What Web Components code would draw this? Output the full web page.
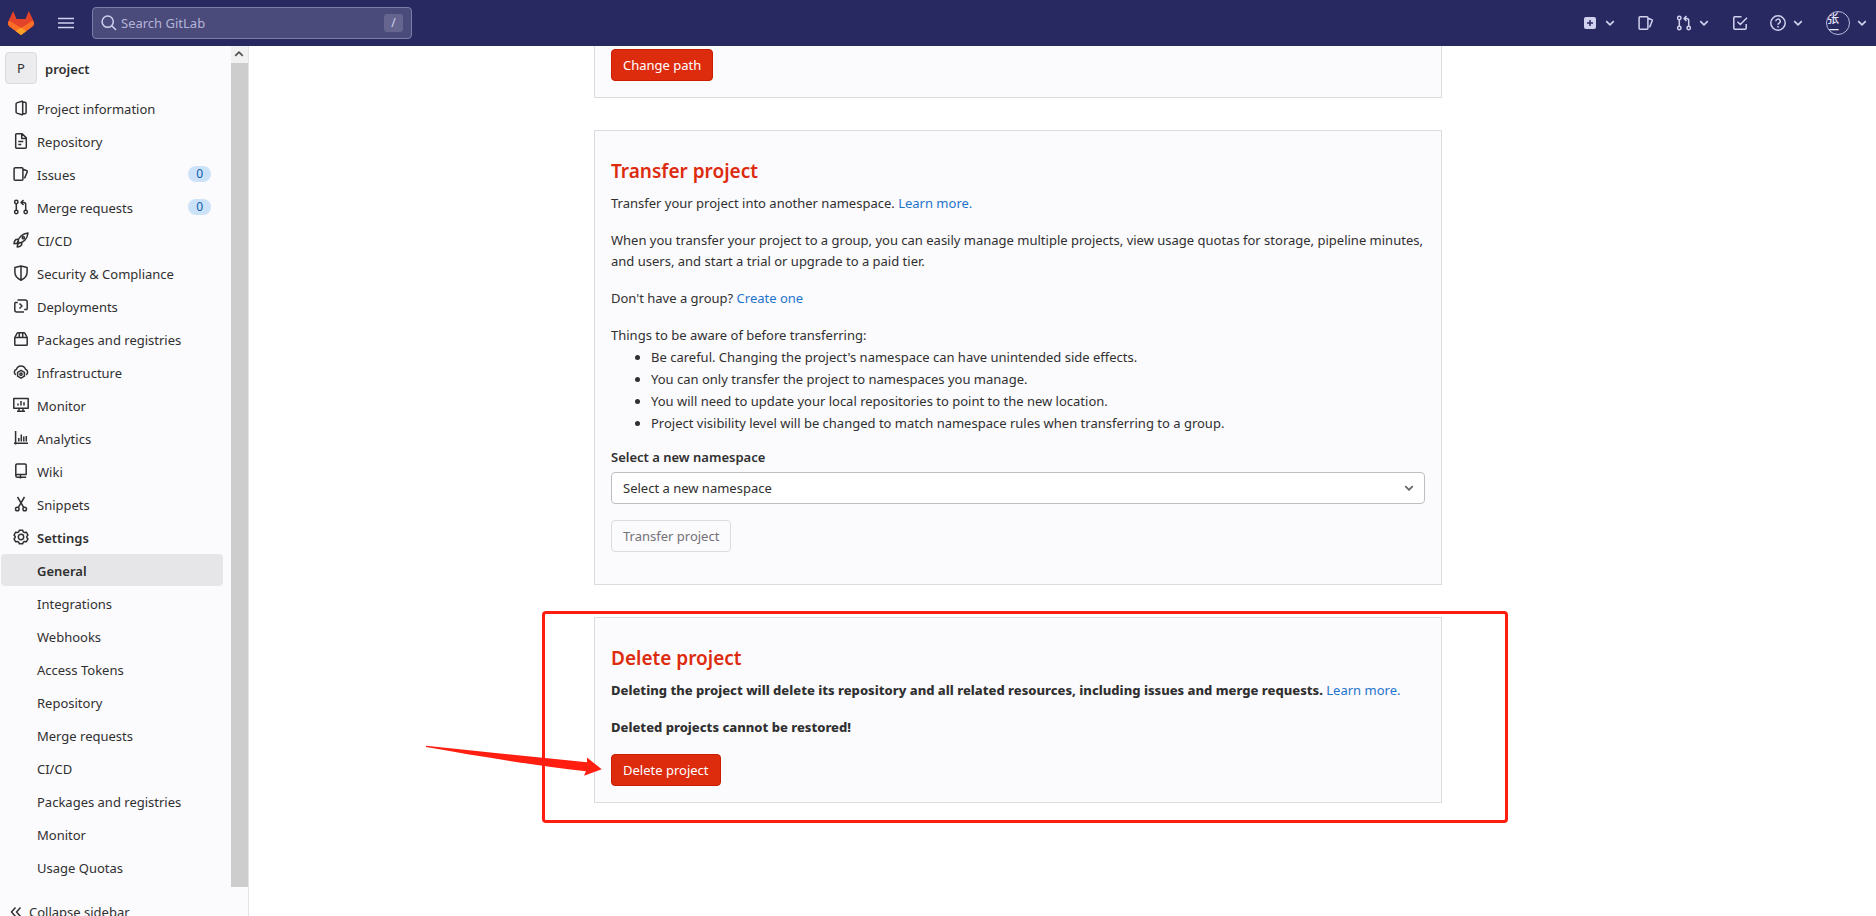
<!DOCTYPE html>
<html lang="en">
<head>
<meta charset="utf-8">
<title>General · Settings · project · GitLab</title>
<style>
  body {
    margin: 0;
    font: 13px/21px "Noto Sans", "Noto Sans CJK SC", sans-serif;
    color: #303030;
    background: #fff;
  }
</style>
</head>
<body>
<gl-page></gl-page>

<script>
const icons = {
  project: `<path d="M9.7 1v14M9.7 1 3.8 2.9a1 1 0 0 0-.7 1v8.2a1 1 0 0 0 .7 1L9.7 15M9.7 2.2h2.2a1.2 1.2 0 0 1 1.2 1.2v9.2a1.2 1.2 0 0 1-1.2 1.2H9.7"/>`,
  doc: `<path d="M3.6.8h5.6l4.1 4.1v9.3a1 1 0 0 1-1 1H3.6a.9.9 0 0 1-.9-.9V1.7a.9.9 0 0 1 .9-.9zM8.7 1v4.4H13M5.3 8.6h5M5.3 11.5h3"/>`,
  issues: `<path d="M2.1 1.8h6.8a1 1 0 0 1 1 1v10.4a1 1 0 0 1-1 1H2.1a1 1 0 0 1-1-1V2.8a1 1 0 0 1 1-1zM10 3.3l3.8 1.4a.8.8 0 0 1 .5 1L11.5 12.4"/>`,
  merge: `<circle cx="3.3" cy="3" r="1.7"/><circle cx="3.3" cy="13" r="1.7"/><circle cx="12.7" cy="13" r="1.7"/><path d="M3.3 4.8v6.4M12.7 11.2V5.5a2 2 0 0 0-2-2H8.5M10.5 1 8 3.5 10.5 6"/>`,
  rocket: `<path d="M5 9.4C5.6 5.6 9 1.6 15 1c-.6 6-4.600 9.400-8.400 10zM5.200 7.200 3 7.400C1.600 8.600 1 10.300 1 11.800l3-.6M8.800 10.800l-.2 2.200c-1.200 1.400-2.900 2-4.400 2l.6-3M5 9.400l-1 2 .8.800 1.800-1.200"/><circle cx="10.3" cy="5.7" r="1.1"/>`,
  shield: `<path d="M8 1 1.9 2.6v4.6c0 4 2.7 6.4 6.1 8 3.4-1.6 6.1-4 6.1-8V2.6zM8 1v14"/>`,
  deployments: `<path d="M1.800 4.500V12a2 2 0 0 0 2 2H11M4.500 2h7.700a2 2 0 0 1 2 2v7.500M1.800 4.500h3M14.200 11.500h-3M6.500 5.500 9 8l-2.500 2.500"/>`,
  package: `<path d="M1.800 6.500h12.400v7a.8.8 0 0 1-.8.8H2.600a.8.8 0 0 1-.8-.8zM1.800 6.500l2.400-4.300a1 1 0 0 1 .9-.5h5.800a1 1 0 0 1 .9.5l2.400 4.300M6.300 1.700v4.800M9.700 1.700v4.800"/>`,
  cloud: `<path d="M2.900 10.800A3 3 0 0 1 3.500 5.300 4.700 4.700 0 0 1 12.500 5.300a3 3 0 0 1 .6 5.500"/><path d="M8 6.300l3.400 2v3.900L8 14.200l-3.400-2V8.300z"/><circle cx="8" cy="10.200" r="1.100"/>`,
  monitor: `<path d="M.8 1.500h14.400v9.800H.8zM6 11v3M10 11v3M4 14.200h8M5 6.500v2M8 4v4.500M11 5.300v3.200"/>`,
  chart: `<path d="M2.600 1v13.500M1 13.200h14M5.800 8v3.500M8.300 4.500v7M10.800 6.500v5M13.300 6v5.500"/>`,
  wiki: `<path d="M2.800 12.800V2.200a1.200 1.200 0 0 1 1.200-1.200h8a1.200 1.200 0 0 1 1.200 1.200v9.300H4.300a1.400 1.400 0 0 0 0 2.800h8.900M7.500 11.500v4"/>`,
  scissors: `<circle cx="4.300" cy="13" r="1.800"/><circle cx="11.700" cy="13" r="1.800"/><path d="M5.300 11.400 11.500 1M10.700 11.400 4.500 1"/>`,
  gear: `<path d="M6.300 1.200h3.400l.6 1.700 1.200.7 1.800-.4 1.700 2.900-1.200 1.400v1l1.200 1.400-1.700 2.900-1.800-.4-1.200.7-.6 1.700H6.300l-.6-1.700-1.200-.7-1.800.4L1 9.900l1.200-1.400v-1L1 6.100l1.700-2.900 1.800.4 1.200-.7z"/><circle cx="8" cy="8" r="2.700"/>`,
  collapse: `<path d="M7.500 3.500 3.500 8l4 4.500M12.500 3.500 8.500 8l4 4.500"/>`,
  menu: `<path d="M0 3.500h16M0 8h16M0 12.500h16"/>`,
  search: `<circle cx="6.700" cy="6.700" r="5.600"/><path d="M10.800 10.800 15 15"/>`,
  todo: `<path d="M9.500 1.800H2.800a1 1 0 0 0-1 1v10.400a1 1 0 0 0 1 1h10.400a1 1 0 0 0 1-1V9M5.500 6.800 8.300 9.500 15 2.800"/>`,
  help: `<circle cx="8" cy="8" r="7.200"/><path d="M5.800 6.300a2.200 2.200 0 1 1 3.300 1.900c-.7.4-1.100.8-1.100 1.500M8 11v1.500"/>`,
  chevron: `<path d="M3 5.500 8 10.500l5-5" stroke-width="2.200"/>`,
  plus: `<rect x="2" y="2" width="12" height="12" rx="2" fill="currentColor" stroke="none"/><path d="M8 5v6M5 8h6" stroke="#292961"/>`,
};

class GlIcon extends HTMLElement {
  connectedCallback() {
    const size = this.getAttribute("size") || 16;
    this.attachShadow({ mode: "open" }).innerHTML = `
      <style>
        :host { display: inline-flex; flex: none; }
        svg { fill: none; stroke: currentColor; stroke-width: 1.5; stroke-linejoin: round; }
      </style>
      <svg width="${size}" height="${size}" viewBox="0 0 16 16" aria-hidden="true">${icons[this.getAttribute("name")]}</svg>`;
  }
}

class GlButton extends HTMLElement {
  connectedCallback() {
    this.attachShadow({ mode: "open" }).innerHTML = `
      <style>
        :host { display: block; }
        button {
          display: block;
          height: 32px;
          padding: 0 11px;
          font: inherit;
          color: #fff;
          background: #dd2b0e;
          border: 1px solid #c91c00;
          border-radius: 4px;
        }
        button:disabled { color: #737278; background: #fbfafd; border-color: #dcdcde; }
      </style>
      <button type="button" ${this.hasAttribute("disabled") ? "disabled" : ""}><slot></slot></button>`;
  }
}

class GlNavbar extends HTMLElement {
  connectedCallback() {
    this.attachShadow({ mode: "open" }).innerHTML = `
      <style>
        :host {
          display: flex;
          align-items: center;
          flex: none;
          height: 46px;
          padding: 0 8px;
          box-sizing: border-box;
          color: #d1d1f0;
          background: #292961;
        }
        button, a { display: flex; align-items: center; gap: 6px; padding: 0; border: 0; background: none; color: inherit; font: inherit; text-decoration: none; }
        .menu { margin: 0 18px 0 24px; }
        .search {
          display: flex;
          align-items: center;
          width: 320px;
          height: 32px;
          padding: 0 8px;
          gap: 4px;
          box-sizing: border-box;
          background: #4a4a7b;
          border: 1px solid #7d7dac;
          border-radius: 4px;
        }
        input { flex: 1; min-width: 0; padding: 0; border: 0; outline: 0; background: none; color: inherit; font: inherit; }
        input::placeholder { color: #b4b4d8; opacity: 1; }
        kbd {
          width: 19px;
          height: 18px;
          font: 12px/18px "Noto Sans", sans-serif;
          text-align: center;
          background: #65658f;
          border-radius: 3px;
        }
        .tools { display: flex; align-items: center; gap: 22px; margin-left: auto; }
        .avatar {
          width: 24px;
          height: 24px;
          padding-top: 1px;
          box-sizing: border-box;
          overflow: hidden;
          border: 1px solid #b9b9e0;
          border-radius: 50%;
          color: #e6e6fa;
          font-size: 12px;
          font-weight: 500;
          line-height: 12px;
          text-align: left;
        }
      </style>
      <a href="#" aria-label="Dashboard">
        <svg width="26" height="26" viewBox="0 0 26 26">
          <path fill="#e24329" d="M13 25 1 16 0 12 5.200 1 8.500 9h9L20.800 1 26 12l-1 4z"/>
          <path fill="#fc6d26" d="M13 25 1.500 16.500A4 4 0 0 1 .3 11.800L2 11l11 7 11-7 1.700.8a4 4 0 0 1-1.200 4.700z"/>
          <path fill="#fca326" d="M13 25 7.800 21.200 13 17.500l5.200 3.700z"/>
        </svg>
      </a>
      <button class="menu" aria-label="Menu"><gl-icon name="menu"></gl-icon></button>
      <label class="search">
        <gl-icon name="search"></gl-icon>
        <input type="text" placeholder="Search GitLab" aria-label="Search GitLab">
        <kbd>/</kbd>
      </label>
      <div class="tools">
        <button aria-label="Create new"><gl-icon name="plus"></gl-icon><gl-icon name="chevron" size="12"></gl-icon></button>
        <a href="#" aria-label="Issues"><gl-icon name="issues"></gl-icon></a>
        <button aria-label="Merge requests"><gl-icon name="merge"></gl-icon><gl-icon name="chevron" size="12"></gl-icon></button>
        <a href="#" aria-label="To-Do List"><gl-icon name="todo"></gl-icon></a>
        <button aria-label="Help"><gl-icon name="help"></gl-icon><gl-icon name="chevron" size="12"></gl-icon></button>
        <button><div class="avatar">张<br>一</div><gl-icon name="chevron" size="12"></gl-icon></button>
      </div>`;
  }
}

class NavItem extends HTMLElement {
  connectedCallback() {
    const icon = this.getAttribute("icon");
    const count = this.getAttribute("count");
    this.attachShadow({ mode: "open" }).innerHTML = `
      <style>
        :host { display: block; margin: 0 8px 1px 1px; }
        a {
          display: flex;
          align-items: center;
          gap: 8px;
          height: 32px;
          padding: 0 12px;
          color: inherit;
          text-decoration: none;
          border-radius: 4px;
        }
        .text { padding-top: 2px; }
        a.sub { padding-left: 36px; }
        :host([active]) a { background: #e6e6e8; }
        :host([bold]) a { font-weight: 600; }
        .badge {
          margin-left: auto;
          padding: 0 8px;
          font-size: 12px;
          line-height: 16px;
          color: #0b5cad;
          background: #cbe2f9;
          border-radius: 8px;
        }
      </style>
      <a href="#" class="${icon ? "" : "sub"}">
        ${icon ? `<gl-icon name="${icon}"></gl-icon>` : ""}
        <span class="text"><slot></slot></span>
        ${count ? `<span class="badge">${count}</span>` : ""}
      </a>`;
  }
}

class GlSidebar extends HTMLElement {
  connectedCallback() {
    this.attachShadow({ mode: "open" }).innerHTML = `
      <style>
        :host {
          display: flex;
          flex-direction: column;
          flex: none;
          width: 248px;
          background: #fbfafd;
          border-right: 1px solid #e3e3e6;
        }
        .scroll { display: flex; flex: none; }
        nav { flex: 1; padding-bottom: 3px; }
        .track { display: flex; flex-direction: column; width: 17px; background: #cdcdcd; }
        .track gl-icon { justify-content: center; padding: 3px 0 2px; color: #505050; background: #f1f1f1; transform: rotate(180deg); }
        .context { display: flex; align-items: center; gap: 8px; padding: 6px 5px 8px; color: inherit; font-weight: 600; text-decoration: none; }
        .name { padding-top: 2px; }
        .avatar {
          width: 30px;
          font-weight: 400;
          line-height: 30px;
          text-align: center;
          background: #ececef;
          border: 1px solid #dcdcde;
          border-radius: 4px;
        }
        .toggle {
          display: flex;
          align-items: center;
          flex: none;
          gap: 5px;
          height: 50px;
          padding: 0 8px;
          border: 0;
          background: none;
          color: inherit;
          font: inherit;
        }
      </style>
      <div class="scroll">
        <nav aria-label="Project navigation">
          <a class="context" href="#"><span class="avatar">P</span><span class="name">project</span></a>
          <nav-item icon="project">Project information</nav-item>
          <nav-item icon="doc">Repository</nav-item>
          <nav-item icon="issues" count="0">Issues</nav-item>
          <nav-item icon="merge" count="0">Merge requests</nav-item>
          <nav-item icon="rocket">CI/CD</nav-item>
          <nav-item icon="shield">Security &amp; Compliance</nav-item>
          <nav-item icon="deployments">Deployments</nav-item>
          <nav-item icon="package">Packages and registries</nav-item>
          <nav-item icon="cloud">Infrastructure</nav-item>
          <nav-item icon="monitor">Monitor</nav-item>
          <nav-item icon="chart">Analytics</nav-item>
          <nav-item icon="wiki">Wiki</nav-item>
          <nav-item icon="scissors">Snippets</nav-item>
          <nav-item icon="gear" bold>Settings</nav-item>
          <nav-item active bold>General</nav-item>
          <nav-item>Integrations</nav-item>
          <nav-item>Webhooks</nav-item>
          <nav-item>Access Tokens</nav-item>
          <nav-item>Repository</nav-item>
          <nav-item>Merge requests</nav-item>
          <nav-item>CI/CD</nav-item>
          <nav-item>Packages and registries</nav-item>
          <nav-item>Monitor</nav-item>
          <nav-item>Usage Quotas</nav-item>
        </nav>
        <div class="track"><gl-icon name="chevron" size="12"></gl-icon></div>
      </div>
      <button class="toggle" type="button"><gl-icon name="collapse"></gl-icon>Collapse sidebar</button>`;
  }
}

class DangerPanel extends HTMLElement {
  connectedCallback() {
    const heading = this.getAttribute("heading");
    this.attachShadow({ mode: "open" }).innerHTML = `
      <style>
        :host { display: block; padding: 16px; background: #fbfafd; border: 1px solid #dcdcde; }
        h4 { margin: 12px 0 10px; font-size: 19px; line-height: 24px; font-weight: 600; color: #dd2b0e; }
        ::slotted(p) { margin: 0 0 16px; }
      </style>
      ${heading ? `<h4>${heading}</h4>` : ""}
      <slot></slot>`;
  }
}

class NamespaceSelect extends HTMLElement {
  connectedCallback() {
    this.attachShadow({ mode: "open" }).innerHTML = `
      <style>
        :host { display: block; margin-bottom: 16px; }
        label { display: block; margin-bottom: 4px; font-weight: 600; }
        .field { display: grid; align-items: center; }
        select, gl-icon { grid-area: 1 / 1; }
        select {
          appearance: none;
          width: 100%;
          height: 32px;
          padding: 0 11px;
          font: inherit;
          color: inherit;
          background: #fff;
          border: 1px solid #bfbfc3;
          border-radius: 4px;
        }
        gl-icon { justify-self: end; margin-right: 10px; color: #626168; pointer-events: none; }
      </style>
      <label for="namespace">Select a new namespace</label>
      <div class="field">
        <select id="namespace"><option>Select a new namespace</option></select>
        <gl-icon name="chevron" size="12"></gl-icon>
      </div>`;
  }
}

// Red frame and arrow drawn over whatever is slotted in
class MarkedArea extends HTMLElement {
  connectedCallback() {
    this.attachShadow({ mode: "open" }).innerHTML = `
      <style>
        :host { display: block; position: relative; }
        .frame {
          position: absolute;
          inset: -6px -66px -20px -52px;
          border: 3px solid #ff1e10;
          border-radius: 4px;
          pointer-events: none;
        }
        svg { position: absolute; left: -168px; top: 128px; pointer-events: none; }
      </style>
      <slot></slot>
      <div class="frame"></div>
      <svg width="176" height="32" viewBox="0 0 176 32">
        <path fill="#ff1e10" d="M0 .8 161 17.300V12.500L175.700 24.300 158 30.700 160 26.300C105 20 52 11 0 2z"/>
      </svg>`;
  }
}

class GlPage extends HTMLElement {
  connectedCallback() {
    this.attachShadow({ mode: "open" }).innerHTML = `
      <style>
        :host { display: flex; flex-direction: column; height: 100vh; overflow: hidden; }
        .layout { display: flex; flex: 1; min-height: 0; }
        main { flex: 1; min-width: 0; padding-left: 7px; }
        .content {
          display: flex;
          flex-direction: column;
          gap: 32px;
          max-width: 1280px;
          margin: 0 auto;
          padding: 0 264px 0 168px;
          box-sizing: border-box;
        }
        .first { border-top: 0; padding-top: 3px; }
        a { color: #1f75cb; text-decoration: none; }
        ul { margin: 0 0 13px; padding-left: 40px; line-height: 22px; }
        .intro { margin-bottom: 0; }
        .transfer { margin-bottom: 16px; }
        b { font-weight: 800; }
      </style>
      <gl-navbar></gl-navbar>
      <div class="layout">
        <gl-sidebar></gl-sidebar>
        <main>
          <div class="content">
            <danger-panel class="first"><gl-button>Change path</gl-button></danger-panel>
            <danger-panel heading="Transfer project">
              <p>Transfer your project into another namespace. <a href="#">Learn more.</a></p>
              <p>When you transfer your project to a group, you can easily manage multiple projects, view usage quotas for storage, pipeline minutes, and users, and start a trial or upgrade to a paid tier.</p>
              <p>Don't have a group? <a href="#">Create one</a></p>
              <p class="intro">Things to be aware of before transferring:</p>
              <ul>
                <li>Be careful. Changing the project's namespace can have unintended side effects.</li>
                <li>You can only transfer the project to namespaces you manage.</li>
                <li>You will need to update your local repositories to point to the new location.</li>
                <li>Project visibility level will be changed to match namespace rules when transferring to a group.</li>
              </ul>
              <namespace-select></namespace-select>
              <gl-button class="transfer" disabled>Transfer project</gl-button>
            </danger-panel>
            <marked-area>
              <danger-panel heading="Delete project">
                <p><b>Deleting the project will delete its repository and all related resources, including issues and merge requests.</b> <a href="#">Learn more.</a></p>
                <p><b>Deleted projects cannot be restored!</b></p>
                <gl-button>Delete project</gl-button>
              </danger-panel>
            </marked-area>
          </div>
        </main>
      </div>`;
  }
}

customElements.define("gl-icon", GlIcon);
customElements.define("gl-button", GlButton);
customElements.define("gl-navbar", GlNavbar);
customElements.define("nav-item", NavItem);
customElements.define("gl-sidebar", GlSidebar);
customElements.define("danger-panel", DangerPanel);
customElements.define("namespace-select", NamespaceSelect);
customElements.define("marked-area", MarkedArea);
customElements.define("gl-page", GlPage);
</script>
</body>
</html>
